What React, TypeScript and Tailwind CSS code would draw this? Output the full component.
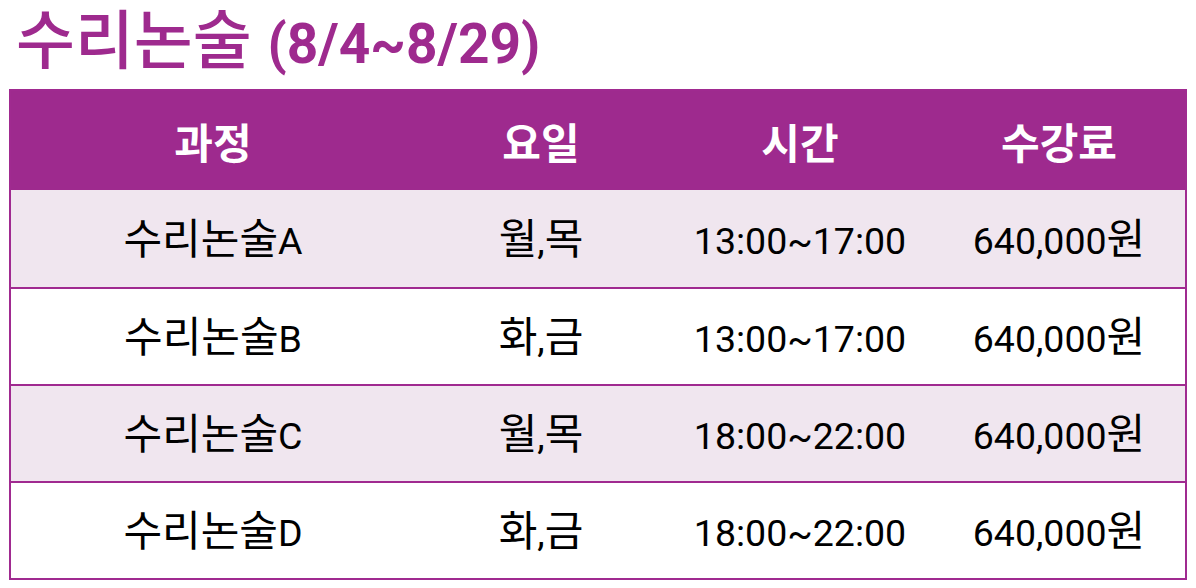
import React from 'react';

const rows = [
  { course: '수리논술A', days: '월,목', time: '13:00~17:00', fee: '640,000원' },
  { course: '수리논술B', days: '화,금', time: '13:00~17:00', fee: '640,000원' },
  { course: '수리논술C', days: '월,목', time: '18:00~22:00', fee: '640,000원' },
  { course: '수리논술D', days: '화,금', time: '18:00~22:00', fee: '640,000원' },
];

const cols = 'grid grid-cols-[404px_252px_266px_252px]';

// hangul runs are drawn a bit larger than latin/digits, as in the original
const Mixed: React.FC<{ text: string }> = ({ text }) => {
  const parts = text.match(/[\uac00-\ud7a3]+|[^\uac00-\ud7a3]+/g) || [];
  return (
    <>
      {parts.map((p, i) =>
        /[\uac00-\ud7a3]/.test(p) ? (
          <span key={i} className="text-[42px] font-['Noto_Sans_CJK_KR',sans-serif]">
            {p}
          </span>
        ) : (
          <span key={i} className="text-[37.5px] font-['Roboto',sans-serif]">
            {p}
          </span>
        ),
      )}
    </>
  );
};

const App: React.FC = () => {
  return (
    <div className="w-[1196px] h-[588px] bg-white font-['Roboto','Noto_Sans_CJK_KR',sans-serif]">
      <div className="h-[89px] pl-[16px] flex items-baseline gap-[16px] text-[#9e2a8e] leading-[71px]">
        <span className="text-[64px] font-medium font-['Noto_Sans_CJK_KR',sans-serif]">수리논술</span>
        <span className="text-[55px] font-bold">(8/4~8/29)</span>
      </div>
      <div className="ml-[9px] w-[1178px] border-2 border-[#a02a90]">
        <div className={`${cols} h-[99px] bg-[#9e2a8e] text-white text-[42px] font-bold items-center text-center font-['Noto_Sans_CJK_KR',sans-serif]`}>
          <div>과정</div>
          <div>요일</div>
          <div>시간</div>
          <div>수강료</div>
        </div>
        {rows.map((r, i) => (
          <div
            key={r.course}
            className={`${cols} h-[97px] items-center text-center text-black text-[42px] leading-[56px] font-['Noto_Sans_CJK_KR',sans-serif] border-[#a02a90] ${i > 0 ? 'border-t-2' : ''} ${i % 2 === 0 ? 'bg-[#f0e6ef]' : 'bg-white'}`}
          >
            <div><Mixed text={r.course} /></div>
            <div><Mixed text={r.days} /></div>
            <div><Mixed text={r.time} /></div>
            <div><Mixed text={r.fee} /></div>
          </div>
        ))}
      </div>
    </div>
  );
};

export default App;
